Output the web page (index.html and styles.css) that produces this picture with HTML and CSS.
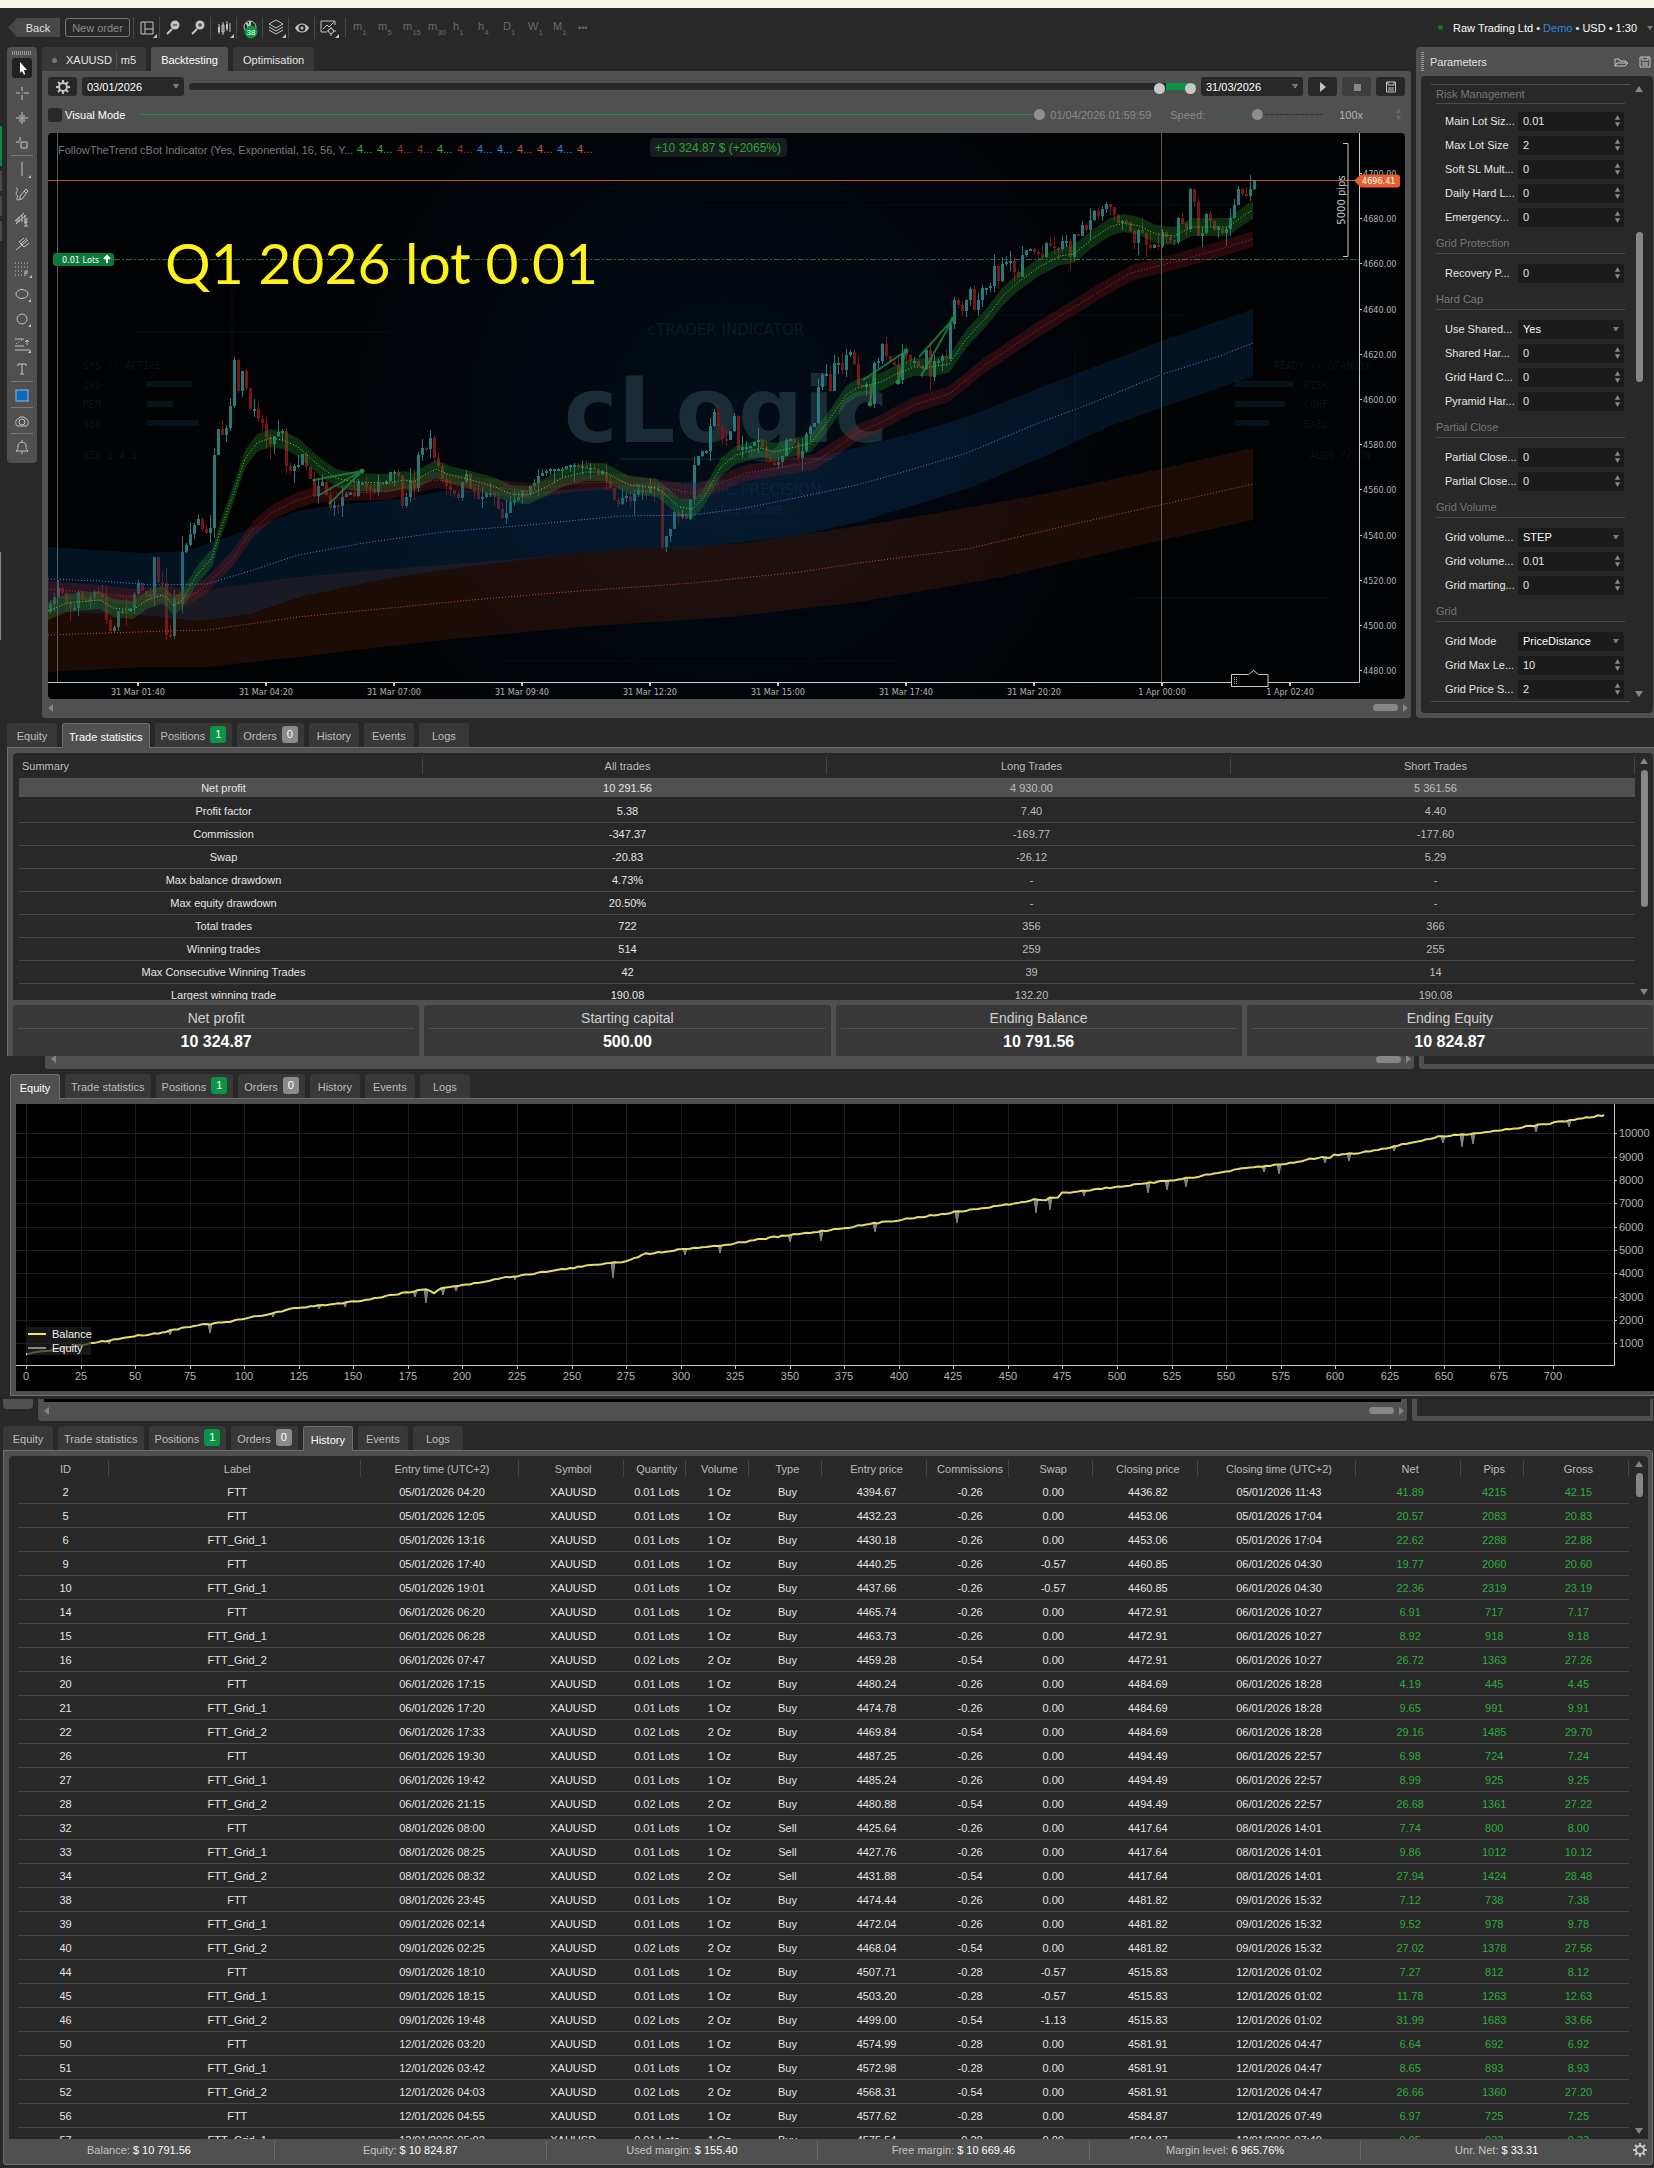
FILE: index.html
```html
<!DOCTYPE html>
<html lang="en">
<head>
<meta charset="utf-8">
<title>XAUUSD m5 – Backtesting</title>
<link rel="stylesheet" href="styles.css">
</head>
<body>
<div class="edge"><i class="edge-green"></i><i></i><i></i><i></i><i class="edge-thumb"></i></div>
<header class="topbar">
  <button class="back">Back</button>
  <button class="new-order">New order</button>
  <nav class="tools" aria-label="Chart tools">
    <button aria-label="Layout"><svg viewBox="0 0 22 22"><path d="M5 5h12v12H5zM9 5v12M9 12h8"/><path class="solid" d="M21 17v4h-4z"/></svg></button>
    <button class="slim" aria-label="Zoom out"><svg viewBox="0 0 22 22"><circle class="solid" cx="13" cy="8" r="4.500"/><path class="thick" d="M10 12l-5 5"/><path class="dark" d="M11 8h4"/></svg></button>
    <button class="slim last" aria-label="Zoom in"><svg viewBox="0 0 22 22"><circle class="solid" cx="13" cy="8" r="4.500"/><path class="thick" d="M10 12l-5 5"/><path class="dark" d="M11 8h4M13 6v4"/></svg></button>
    <button aria-label="Chart type"><svg viewBox="0 0 22 22"><path d="M6 7v10M10 5v13M14 4v10M17 6v9"/><path class="solid" d="M5 10h2v5H5zM13 7h2v5h-2z"/><path d="M9 8h2v7H9z"/><path class="solid" d="M21 17v4h-4z"/></svg></button>
    <button aria-label="Indicators"><svg viewBox="0 0 22 22"><circle cx="11" cy="10" r="6"/><path class="thick" d="M11 4v12M7 6c3 1 3 7 0 9"/><circle fill="#0a9447" stroke="none" cx="12" cy="15" r="6.500"/><text x="12" y="18" text-anchor="middle">38</text></svg></button>
    <button aria-label="Layers"><svg viewBox="0 0 22 22"><path d="M11 3l7 4-7 4-7-4zM4 10l7 4 7-4M4 13l7 4 7-4"/><path class="solid" d="M21 17v4h-4z"/></svg></button>
    <button aria-label="Visibility"><svg viewBox="0 0 22 22"><path class="solid" d="M4 11c3-6 11-6 14 0-3 6-11 6-14 0z"/><circle fill="#282828" stroke="none" cx="11" cy="11" r="3.500"/><circle class="solid" cx="11" cy="11" r="1.500"/></svg></button>
    <button aria-label="Optimise settings"><svg viewBox="0 0 22 22"><path d="M18 8V4H4v11h6M6 12l4-4 2 2 5-5"/><circle cx="14" cy="14" r="2.500"/><path d="M14 10v2M14 16v3M10 14h2M16 14h3"/><path class="solid" d="M22 17v4h-4z"/></svg></button>
  </nav>
  <nav class="frames" aria-label="Time frames">
    <button>m<sub>1</sub></button><button>m<sub>5</sub></button><button>m<sub>15</sub></button><button>m<sub>30</sub></button><button>h<sub>1</sub></button><button>h<sub>4</sub></button><button>D<sub>1</sub></button><button>W<sub>1</sub></button><button>M<sub>1</sub></button><button class="more">•••</button>
  </nav>
  <div class="account"><i class="online"></i><span>Raw Trading Ltd • <b>Demo</b> • USD • 1:30</span><i class="caret"></i></div>
</header>

<main class="workspace">
  <aside class="toolbox">
    <i class="grip"></i>
    <button class="on" aria-label="Pointer"><svg viewBox="0 0 20 20"><path fill="#fff" stroke="none" d="M8 4v11l2-2 2 4 1-1-1-4h3z"/></svg></button>
    <button aria-label="Crosshair"><svg viewBox="0 0 20 20"><path d="M10 4v4M10 12v5M4 10h4M12 10h5M10 10h1"/></svg></button>
    <button aria-label="Snap crosshair"><svg viewBox="0 0 20 20"><path d="M4 10h3M13 10h3M10 4v12M8 7v2M12 7v2M8 11v3M12 11v3M7 10h6"/></svg></button>
    <button aria-label="Marker"><svg viewBox="0 0 20 20"><path d="M8 4v4M4 9h4M9 9h6v6H9z"/></svg></button>
    <hr>
    <button aria-label="Line"><svg viewBox="0 0 20 20"><path d="M10 3v14"/><path class="solid" d="M19 16v3h-3z"/></svg></button>
    <button aria-label="Pencil"><svg viewBox="0 0 20 20"><path d="M4 4c4 1-2 6 1 7 2 1-2 5 1 5l4-1 6-8-2-2-6 7v3M12 7l2 2"/></svg></button>
    <button aria-label="Elliott wave"><svg viewBox="0 0 20 20"><path d="M3 12l9-8M4 15l10-9M7 8v5M10 6v7M13 6v9M12 13h4M12 17h4M16 10h-2v7M5 10v4"/></svg></button>
    <button aria-label="Pitchfork"><svg viewBox="0 0 20 20"><path d="M4 16l12-10M7 8l5 5M7 8l5-4M9 10l6-6M12 13l5-4"/></svg></button>
    <button aria-label="Fibonacci"><svg viewBox="0 0 20 20"><path class="dots" d="M3 4h14M3 8h14M3 12h8M3 16h8"/><path d="M13 17v-5h3M13 14h3"/><path class="solid" d="M20 16v3h-3z"/></svg></button>
    <button aria-label="Ellipse"><svg viewBox="0 0 20 20"><ellipse cx="10" cy="10" rx="6" ry="4.500"/><path class="solid" d="M19 15v3h-3z"/></svg></button>
    <button aria-label="Circle"><svg viewBox="0 0 20 20"><circle cx="10" cy="10" r="5"/><path class="solid" d="M19 15v3h-3z"/></svg></button>
    <button aria-label="Risk range"><svg viewBox="0 0 20 20"><path d="M3 5h9M3 12h9M3 16h15M15 11V6M13 8l2-2 2 2"/><path class="dots" d="M4 10l6-4"/><path class="solid" d="M19 16v3h-3z"/></svg></button>
    <button aria-label="Text"><svg viewBox="0 0 20 20"><path d="M6 7V5h8v2M10 5v10M8 15h4"/></svg></button>
    <hr>
    <button aria-label="Colour"><svg viewBox="0 0 20 20"><rect x="4" y="5" width="12" height="11" fill="#0a6cc0" stroke="#8fb8dc"/></svg></button>
    <hr>
    <button aria-label="Snapshot"><svg viewBox="0 0 20 20"><path d="M6 15c-3 0-3-7 0-7l2-2h4l2 2c3 0 3 7 0 7z"/><circle cx="10" cy="11" r="3"/></svg></button>
    <hr>
    <button aria-label="Alerts"><svg viewBox="0 0 20 20"><path d="M4 14h12c-2-2-2-3-2-5 0-5-8-5-8 0 0 2 0 3-2 5zM10 3v2M9 16h2"/></svg></button>
  </aside>

  <section class="desk">
    <div class="tabs top-tabs">
      <button class="symbol"><i class="bullet"></i>XAUUSD<span>m5</span></button>
      <button class="active">Backtesting</button>
      <button>Optimisation</button>
    </div>
    <div class="desk-body">
      <div class="period">
        <button class="sq gear" aria-label="Settings"><svg viewBox="0 0 16 16"><circle cx="8" cy="8" r="4"/><path d="M8 1v3M8 12v3M1 8h3M12 8h3M3 3l2 2M11 11l2 2M13 3l-2 2M5 11l-2 2"/></svg></button>
        <select class="date" aria-label="Start date"><option>03/01/2026</option></select>
        <div class="span">
          <input type="range" class="from" min="0" max="1000" value="969" aria-label="Range start">
          <input type="range" class="to" min="0" max="1000" value="1000" aria-label="Range end">
        </div>
        <select class="date" aria-label="End date"><option>31/03/2026</option></select>
        <button class="sq" aria-label="Play"><svg viewBox="0 0 16 16"><path class="solid" d="M5 3v10l6-5z"/></svg></button>
        <button class="sq off" aria-label="Stop"><svg viewBox="0 0 16 16"><path fill="#888" stroke="none" d="M5 5h7v7H5z"/></svg></button>
        <button class="sq" aria-label="Save"><svg viewBox="0 0 16 16"><path d="M3.500 3h9v10h-9zM5 3v3h6V3M5 9h6M5 11h6"/></svg></button>
      </div>
      <div class="visual">
        <label class="check"><input type="checkbox">Visual Mode</label>
        <input type="range" class="progress" value="100" disabled aria-label="Progress">
        <span class="stamp">01/04/2026 01:59:59</span>
        <label class="speed-label" for="speed">Speed:</label>
        <input id="speed" type="range" class="speed" value="38" disabled>
        <output>100x</output>
        <i class="updown"></i>
      </div>
      <svg id="price" class="price" viewBox="48 133 1357 566" role="img" aria-label="XAUUSD m5 chart">
        <defs><radialGradient id="glow" gradientUnits="userSpaceOnUse" cx="726" cy="420" r="460"><stop offset="0" stop-color="#020d16"/><stop offset=".5" stop-color="#01060d"/><stop offset="1" stop-color="#010203"/></radialGradient></defs>
        <rect x="48" y="133" width="1357" height="566" fill="url(#glow)"/>
        <g stroke="#060e12"><path d="M700 205h560M130 332h260M940 315h250M500 661h400M1130 598h200M232 280v120M1075 350v90M700 527h100"/></g>
        <g class="hud">
          <text x="83" y="369">SYS // ACTIVE</text><text x="83" y="389">CPU</text><text x="83" y="408">MEM</text><text x="83" y="428">SIG</text><text x="83" y="459">VER 2.4.1</text>
          <text x="1274" y="369">READY // STANDBY</text><text x="1304" y="389">RISK</text><text x="1304" y="408">CONF</text><text x="1304" y="428">EXEC</text><text x="1310" y="459">ALGO // ON</text>
          <path fill="#05131a" d="M147 381h45v6h-45zM147 401h26v6h-26zM147 420h52v6h-52zM1235 381h58v6h-58zM1235 401h50v6h-50zM1235 420h34v6h-34z"/>
        </g>
        <g class="mark">
          <text x="726" y="335" class="mark-s">cTRADER INDICATOR</text>
          <text x="726" y="442" class="mark-l">cLogic</text>
          <path d="M620 459h212" stroke="#081c24" stroke-width="2"/>
          <text x="726" y="495" class="mark-s">ALGORITHMIC PRECISION</text>
          <text x="726" y="514" class="mark-xs">INTELLIGENCE ENGINE</text>
        </g>
        <g id="candles"></g>
        <g id="bands"></g>
        <g class="deals"><path d="M314 480l48-9-43 24M330 503l32-32M863 380l43-29-8 31M870 404l4-32M919 357l34-38-32 57"/><circle cx="362" cy="471" r="2"/><circle cx="314" cy="480" r="1"/><circle cx="319" cy="495" r="1"/><circle cx="330" cy="503" r="1"/><circle cx="870" cy="404" r="2"/><circle cx="898" cy="382" r="2"/><circle cx="906" cy="351" r="2"/><circle cx="953" cy="319" r="2"/></g>
        <path d="M57.500 133v549M1161.500 133v549" stroke="#5c5c5c"/>
        <path d="M48 180.500h1311" stroke="#c0563f"/>
        <path d="M114 259.500h1245" stroke="#2c6a42" stroke-dasharray="6 2 2 2"/>
        <path d="M48 682.500h1311.500V133" fill="none" stroke="#c8c8c8"/>
        <g id="ticks" class="axis"></g>
        <path d="M1343 143.500h5v113h-5" fill="none" stroke="#c8c8c8"/>
        <text class="pips" transform="rotate(-90 1345 200)" x="1345" y="200">5000 pips</text>
        <path d="M1354 180.500l7-6h36q3 0 3 3v7q0 3-3 3h-36z" fill="#e85f2b"/>
        <text x="1362" y="184" class="tag">4696.41</text>
        <rect x="53" y="253" width="61" height="13" rx="3" fill="#0a7a3c"/>
        <text x="62" y="263" class="tag">0.01 Lots</text><path d="M107 263v-7M104 259l3-3 3 3" stroke="#fff" stroke-width="2" fill="none"/>
        <path d="M1231.500 674.500h17l5-4 5 4h9.500v12h-36.500z" fill="#000" stroke="#c8c8c8"/>
        <path d="M1234.500 677v7M1236.500 677v7" stroke="#aaa" stroke-dasharray="1 1"/>
        <text x="58" y="154" class="study">FollowTheTrend cBot Indicator (Yes, Exponential, 16, 56, Y...</text>
        <g id="outputs" class="study"></g>
        <rect x="650" y="138" width="137" height="19" rx="4" fill="#1a1d1e"/>
        <text x="718" y="152" class="gain">+10 324.87 $ (+2065%)</text>
        <text x="165" y="284" class="headline">Q1 2026 lot 0.01</text>
      </svg>
      <div class="hscroll"><i class="left"></i><i class="thumb"></i><i class="right"></i></div>
    </div>
  </section>

  <aside class="params">
    <header><i class="grip"></i><h2>Parameters</h2>
      <button aria-label="Open"><svg viewBox="0 0 16 16"><path d="M2 12V5h4l1 2h6v2M2 12h10l3-3H4z"/></svg></button>
      <button aria-label="Save"><svg viewBox="0 0 16 16"><path d="M3 3h10v10H3zM5 3v3h6V3M5 9h6M5 11h6"/></svg></button>
    </header>
    <div class="params-body">
      <form class="fields">
        <h3>Risk Management</h3>
        <div><label for="p1">Main Lot Siz...</label><span class="num"><input id="p1" value="0.01"></span></div>
        <div><label for="p2">Max Lot Size</label><span class="num"><input id="p2" value="2"></span></div>
        <div><label for="p3">Soft SL Mult...</label><span class="num"><input id="p3" value="0"></span></div>
        <div><label for="p4">Daily Hard L...</label><span class="num"><input id="p4" value="0"></span></div>
        <div><label for="p5">Emergency...</label><span class="num"><input id="p5" value="0"></span></div>
        <h3>Grid Protection</h3>
        <div><label for="p6">Recovery P...</label><span class="num"><input id="p6" value="0"></span></div>
        <h3>Hard Cap</h3>
        <div><label for="p7">Use Shared...</label><select id="p7"><option>Yes</option></select></div>
        <div><label for="p8">Shared Har...</label><span class="num"><input id="p8" value="0"></span></div>
        <div><label for="p9">Grid Hard C...</label><span class="num"><input id="p9" value="0"></span></div>
        <div><label for="p10">Pyramid Har...</label><span class="num"><input id="p10" value="0"></span></div>
        <h3>Partial Close</h3>
        <div><label for="p11">Partial Close...</label><span class="num"><input id="p11" value="0"></span></div>
        <div><label for="p12">Partial Close...</label><span class="num"><input id="p12" value="0"></span></div>
        <h3>Grid Volume</h3>
        <div><label for="p13">Grid volume...</label><select id="p13"><option>STEP</option></select></div>
        <div><label for="p14">Grid volume...</label><span class="num"><input id="p14" value="0.01"></span></div>
        <div><label for="p15">Grid marting...</label><span class="num"><input id="p15" value="0"></span></div>
        <h3>Grid</h3>
        <div><label for="p16">Grid Mode</label><select id="p16"><option>PriceDistance</option></select></div>
        <div><label for="p17">Grid Max Le...</label><span class="num"><input id="p17" value="10"></span></div>
        <div><label for="p18">Grid Price S...</label><span class="num"><input id="p18" value="2"></span></div>
      </form>
      <div class="vscroll"><i class="up"></i><i class="thumb"></i><i class="down"></i></div>
    </div>
  </aside>
</main>

<section class="report stats">
  <div class="tabs"><button>Equity</button><button class="active">Trade statistics</button><button>Positions<em class="pos">1</em></button><button>Orders<em>0</em></button><button>History</button><button>Events</button><button>Logs</button></div>
  <div class="report-body">
    <div class="listing">
      <table class="summary">
        <thead><tr><th>Summary<th>All trades<th>Long Trades<th>Short Trades</tr></thead>
        <tbody>
        <tr class="picked"><td>Net profit<td>10 291.56<td>4 930.00<td>5 361.56</tr>
        <tr><td>Profit factor<td>5.38<td>7.40<td>4.40</tr>
        <tr><td>Commission<td>-347.37<td>-169.77<td>-177.60</tr>
        <tr><td>Swap<td>-20.83<td>-26.12<td>5.29</tr>
        <tr><td>Max balance drawdown<td>4.73%<td>-<td>-</tr>
        <tr><td>Max equity drawdown<td>20.50%<td>-<td>-</tr>
        <tr><td>Total trades<td>722<td>356<td>366</tr>
        <tr><td>Winning trades<td>514<td>259<td>255</tr>
        <tr><td>Max Consecutive Winning Trades<td>42<td>39<td>14</tr>
        <tr><td>Largest winning trade<td>190.08<td>132.20<td>190.08</tr>
        </tbody>
      </table>
      <div class="vscroll"><i class="up"></i><i class="thumb"></i><i class="down"></i></div>
    </div>
    <dl class="cards">
      <div><dt>Net profit</dt><dd>10 324.87</dd></div>
      <div><dt>Starting capital</dt><dd>500.00</dd></div>
      <div><dt>Ending Balance</dt><dd>10 791.56</dd></div>
      <div><dt>Ending Equity</dt><dd>10 824.87</dd></div>
    </dl>
  </div>
</section>

<div class="seam seam-a"><div class="seam-main"><div class="hscroll"><i class="left"></i><i class="thumb"></i><i class="right"></i></div></div><div class="seam-side"></div></div>

<section class="report equity">
  <div class="tabs"><button class="active">Equity</button><button>Trade statistics</button><button>Positions<em class="pos">1</em></button><button>Orders<em>0</em></button><button>History</button><button>Events</button><button>Logs</button></div>
  <div class="report-body">
    <svg id="curve" class="curve" viewBox="16 1104 1638 287" role="img" aria-label="Balance and equity curve">
      <rect x="16" y="1104" width="1638" height="287"/>
      <g id="grid"></g>
      <path id="eq" fill="#7a7a7a" stroke="#8a8a8a"/>
      <path id="bal" fill="none" stroke="#e4df6a" stroke-width="2"/>
      <rect x="27" y="1327" width="64" height="28" fill="#222" fill-opacity=".7"/>
      <path d="M28 1334h18" stroke="#f0e860" stroke-width="2"/><path d="M28 1348h18" stroke="#8a8a8a" stroke-width="2"/>
      <text x="52" y="1338" class="key">Balance</text><text x="52" y="1352" class="key">Equity</text>
      <path d="M16 1365.500h1598.500V1104" fill="none" stroke="#c8c8c8"/>
    </svg>
  </div>
</section>

<div class="seam seam-b"><div class="seam-tool"></div><div class="seam-main"><div class="hscroll"><i class="left"></i><i class="thumb"></i><i class="right"></i></div></div><div class="seam-side"></div></div>

<section class="report history">
  <div class="tabs"><button>Equity</button><button>Trade statistics</button><button>Positions<em class="pos">1</em></button><button>Orders<em>0</em></button><button class="active">History</button><button>Events</button><button>Logs</button></div>
  <div class="report-body">
    <div class="listing">
      <table class="trades">
        <colgroup><col class="w91"><col class="w252"><col class="w157"><col class="w105"><col class="w62"><col class="w63"><col class="w73"><col class="w105"><col class="w82"><col class="w84"><col class="w105"><col class="w157"><col class="w105"><col class="w63"><col class="w105"></colgroup>
        <thead><tr><th>ID<th>Label<th>Entry time (UTC+2)<th>Symbol<th>Quantity<th>Volume<th>Type<th>Entry price<th>Commissions<th>Swap<th>Closing price<th>Closing time (UTC+2)<th>Net<th>Pips<th>Gross</tr></thead>
        <tbody>
        <tr><td>2<td>FTT<td>05/01/2026 04:20<td>XAUUSD<td>0.01 Lots<td>1 Oz<td>Buy<td>4394.67<td>-0.26<td>0.00<td>4436.82<td>05/01/2026 11:43<td>41.89<td>4215<td>42.15</tr>
        <tr><td>5<td>FTT<td>05/01/2026 12:05<td>XAUUSD<td>0.01 Lots<td>1 Oz<td>Buy<td>4432.23<td>-0.26<td>0.00<td>4453.06<td>05/01/2026 17:04<td>20.57<td>2083<td>20.83</tr>
        <tr><td>6<td>FTT_Grid_1<td>05/01/2026 13:16<td>XAUUSD<td>0.01 Lots<td>1 Oz<td>Buy<td>4430.18<td>-0.26<td>0.00<td>4453.06<td>05/01/2026 17:04<td>22.62<td>2288<td>22.88</tr>
        <tr><td>9<td>FTT<td>05/01/2026 17:40<td>XAUUSD<td>0.01 Lots<td>1 Oz<td>Buy<td>4440.25<td>-0.26<td>-0.57<td>4460.85<td>06/01/2026 04:30<td>19.77<td>2060<td>20.60</tr>
        <tr><td>10<td>FTT_Grid_1<td>05/01/2026 19:01<td>XAUUSD<td>0.01 Lots<td>1 Oz<td>Buy<td>4437.66<td>-0.26<td>-0.57<td>4460.85<td>06/01/2026 04:30<td>22.36<td>2319<td>23.19</tr>
        <tr><td>14<td>FTT<td>06/01/2026 06:20<td>XAUUSD<td>0.01 Lots<td>1 Oz<td>Buy<td>4465.74<td>-0.26<td>0.00<td>4472.91<td>06/01/2026 10:27<td>6.91<td>717<td>7.17</tr>
        <tr><td>15<td>FTT_Grid_1<td>06/01/2026 06:28<td>XAUUSD<td>0.01 Lots<td>1 Oz<td>Buy<td>4463.73<td>-0.26<td>0.00<td>4472.91<td>06/01/2026 10:27<td>8.92<td>918<td>9.18</tr>
        <tr><td>16<td>FTT_Grid_2<td>06/01/2026 07:47<td>XAUUSD<td>0.02 Lots<td>2 Oz<td>Buy<td>4459.28<td>-0.54<td>0.00<td>4472.91<td>06/01/2026 10:27<td>26.72<td>1363<td>27.26</tr>
        <tr><td>20<td>FTT<td>06/01/2026 17:15<td>XAUUSD<td>0.01 Lots<td>1 Oz<td>Buy<td>4480.24<td>-0.26<td>0.00<td>4484.69<td>06/01/2026 18:28<td>4.19<td>445<td>4.45</tr>
        <tr><td>21<td>FTT_Grid_1<td>06/01/2026 17:20<td>XAUUSD<td>0.01 Lots<td>1 Oz<td>Buy<td>4474.78<td>-0.26<td>0.00<td>4484.69<td>06/01/2026 18:28<td>9.65<td>991<td>9.91</tr>
        <tr><td>22<td>FTT_Grid_2<td>06/01/2026 17:33<td>XAUUSD<td>0.02 Lots<td>2 Oz<td>Buy<td>4469.84<td>-0.54<td>0.00<td>4484.69<td>06/01/2026 18:28<td>29.16<td>1485<td>29.70</tr>
        <tr><td>26<td>FTT<td>06/01/2026 19:30<td>XAUUSD<td>0.01 Lots<td>1 Oz<td>Buy<td>4487.25<td>-0.26<td>0.00<td>4494.49<td>06/01/2026 22:57<td>6.98<td>724<td>7.24</tr>
        <tr><td>27<td>FTT_Grid_1<td>06/01/2026 19:42<td>XAUUSD<td>0.01 Lots<td>1 Oz<td>Buy<td>4485.24<td>-0.26<td>0.00<td>4494.49<td>06/01/2026 22:57<td>8.99<td>925<td>9.25</tr>
        <tr><td>28<td>FTT_Grid_2<td>06/01/2026 21:15<td>XAUUSD<td>0.02 Lots<td>2 Oz<td>Buy<td>4480.88<td>-0.54<td>0.00<td>4494.49<td>06/01/2026 22:57<td>26.68<td>1361<td>27.22</tr>
        <tr><td>32<td>FTT<td>08/01/2026 08:00<td>XAUUSD<td>0.01 Lots<td>1 Oz<td>Sell<td>4425.64<td>-0.26<td>0.00<td>4417.64<td>08/01/2026 14:01<td>7.74<td>800<td>8.00</tr>
        <tr><td>33<td>FTT_Grid_1<td>08/01/2026 08:25<td>XAUUSD<td>0.01 Lots<td>1 Oz<td>Sell<td>4427.76<td>-0.26<td>0.00<td>4417.64<td>08/01/2026 14:01<td>9.86<td>1012<td>10.12</tr>
        <tr><td>34<td>FTT_Grid_2<td>08/01/2026 08:32<td>XAUUSD<td>0.02 Lots<td>2 Oz<td>Sell<td>4431.88<td>-0.54<td>0.00<td>4417.64<td>08/01/2026 14:01<td>27.94<td>1424<td>28.48</tr>
        <tr><td>38<td>FTT<td>08/01/2026 23:45<td>XAUUSD<td>0.01 Lots<td>1 Oz<td>Buy<td>4474.44<td>-0.26<td>0.00<td>4481.82<td>09/01/2026 15:32<td>7.12<td>738<td>7.38</tr>
        <tr><td>39<td>FTT_Grid_1<td>09/01/2026 02:14<td>XAUUSD<td>0.01 Lots<td>1 Oz<td>Buy<td>4472.04<td>-0.26<td>0.00<td>4481.82<td>09/01/2026 15:32<td>9.52<td>978<td>9.78</tr>
        <tr><td>40<td>FTT_Grid_2<td>09/01/2026 02:25<td>XAUUSD<td>0.02 Lots<td>2 Oz<td>Buy<td>4468.04<td>-0.54<td>0.00<td>4481.82<td>09/01/2026 15:32<td>27.02<td>1378<td>27.56</tr>
        <tr><td>44<td>FTT<td>09/01/2026 18:10<td>XAUUSD<td>0.01 Lots<td>1 Oz<td>Buy<td>4507.71<td>-0.28<td>-0.57<td>4515.83<td>12/01/2026 01:02<td>7.27<td>812<td>8.12</tr>
        <tr><td>45<td>FTT_Grid_1<td>09/01/2026 18:15<td>XAUUSD<td>0.01 Lots<td>1 Oz<td>Buy<td>4503.20<td>-0.28<td>-0.57<td>4515.83<td>12/01/2026 01:02<td>11.78<td>1263<td>12.63</tr>
        <tr><td>46<td>FTT_Grid_2<td>09/01/2026 19:48<td>XAUUSD<td>0.02 Lots<td>2 Oz<td>Buy<td>4499.00<td>-0.54<td>-1.13<td>4515.83<td>12/01/2026 01:02<td>31.99<td>1683<td>33.66</tr>
        <tr><td>50<td>FTT<td>12/01/2026 03:20<td>XAUUSD<td>0.01 Lots<td>1 Oz<td>Buy<td>4574.99<td>-0.28<td>0.00<td>4581.91<td>12/01/2026 04:47<td>6.64<td>692<td>6.92</tr>
        <tr><td>51<td>FTT_Grid_1<td>12/01/2026 03:42<td>XAUUSD<td>0.01 Lots<td>1 Oz<td>Buy<td>4572.98<td>-0.28<td>0.00<td>4581.91<td>12/01/2026 04:47<td>8.65<td>893<td>8.93</tr>
        <tr><td>52<td>FTT_Grid_2<td>12/01/2026 04:03<td>XAUUSD<td>0.02 Lots<td>2 Oz<td>Buy<td>4568.31<td>-0.54<td>0.00<td>4581.91<td>12/01/2026 04:47<td>26.66<td>1360<td>27.20</tr>
        <tr><td>56<td>FTT<td>12/01/2026 04:55<td>XAUUSD<td>0.01 Lots<td>1 Oz<td>Buy<td>4577.62<td>-0.28<td>0.00<td>4584.87<td>12/01/2026 07:49<td>6.97<td>725<td>7.25</tr>
        <tr><td>57<td>FTT_Grid_1<td>12/01/2026 05:02<td>XAUUSD<td>0.01 Lots<td>1 Oz<td>Buy<td>4575.54<td>-0.28<td>0.00<td>4584.87<td>12/01/2026 07:49<td>9.05<td>933<td>9.33</tr>
        </tbody>
      </table>
      <div class="vscroll"><i class="up"></i><i class="thumb"></i><i class="down"></i></div>
    </div>
    <footer class="totals">
      <p>Balance: <b>$ 10 791.56</b></p><p>Equity: <b>$ 10 824.87</b></p><p>Used margin: <b>$ 155.40</b></p><p>Free margin: <b>$ 10 669.46</b></p><p>Margin level: <b>6 965.76%</b></p><p>Unr. Net: <b>$ 33.31</b></p>
      <button class="gear" aria-label="Account settings"><svg viewBox="0 0 16 16"><circle cx="8" cy="8" r="4"/><path d="M8 1v3M8 12v3M1 8h3M12 8h3M3 3l2 2M11 11l2 2M13 3l-2 2M5 11l-2 2"/></svg></button>
    </footer>
  </div>
</section>
<script src="charts.js"></script>
</body>
</html>
```
FILE: styles.css
```css
* { box-sizing: border-box; }
body {
  margin: 0;
  border-top: 8px solid #faf3e3;
  background: #282828;
  color: #e6e6e6;
  font: 11px/16px "Liberation Sans", Arial, sans-serif;
  position: relative;
}
button, input, select { font: inherit; color: inherit; border: 0; margin: 0; padding: 0; background: none; appearance: none; border-radius: 0; }
h2, h3, p, dl, dd { margin: 0; font-weight: normal; font-size: 11px; }
i { display: block; font-style: normal; }
svg { display: block; stroke: #c4c4c4; fill: none; stroke-width: 1; }
svg text { stroke: none; }
.solid { fill: #c4c4c4; stroke: none; }
.thick { stroke-width: 2; }
.dark { stroke: #282828; }
.dots { stroke-dasharray: 1 2; }

/* slivers of the window behind, along the left border */
.edge { position: absolute; left: 0; top: 118px; width: 2px; display: flex; flex-direction: column; gap: 5px; }
.edge i { height: 20px; background: #484848; }
.edge .edge-green { height: 40px; background: #0a8a43; }
.edge .edge-thumb { height: 88px; margin-top: 306px; width: 1px; background: #8a8a8a; }

/* top bar */
.topbar { display: flex; align-items: center; height: 39px; padding: 0 1px 0 8px; }
.back { width: 52px; height: 19px; padding-left: 8px; background: #484848; clip-path: polygon(0 50%, 9px 0, 100% 0, 100% 100%, 9px 100%); color: #e0e0e0; }
.new-order { width: 65px; height: 19px; margin: 0 3px 0 5px; border: 1px solid #777; border-radius: 3px; color: #8c8c8c; }
.tools { display: flex; }
.tools button { width: 26px; height: 22px; padding: 0 2px; border-left: 1px solid #484848; }
.tools .slim.last { width: 25px; border-left: 0; }
.tools svg { width: 22px; height: 22px; }
.tools text { font-size: 8px; fill: #fff; }
.frames { display: flex; margin-left: 5px; padding-left: 7px; border-left: 1px solid #484848; color: #6c6c6c; }
.frames button { width: 25px; text-align: left; line-height: 16px; white-space: nowrap; }
.frames sub { font-size: 8px; line-height: 8px; vertical-align: -5px; }
.frames .more { font-size: 9px; }
.account { display: flex; align-items: center; margin-left: auto; gap: 10px; color: #fff; }
.account b { font-weight: normal; color: #2f8bd8; }
.online { width: 5px; height: 5px; border-radius: 50%; background: #0e7a1d; }
.caret { border: 3px solid transparent; border-top: 4px solid #777; border-bottom: 0; }

/* workspace */
.workspace { display: flex; gap: 5px; padding-left: 7px; }
.toolbox { flex: none; width: 30px; align-self: flex-start; padding: 4px 5px; background: #505050; border-radius: 4px; display: flex; flex-direction: column; align-items: center; }
.toolbox .grip { width: 20px; height: 4px; background: repeating-linear-gradient(90deg, #999 0 1px, transparent 1px 2px); }
.toolbox button { width: 20px; height: 25px; flex: none; }
.toolbox svg { width: 20px; height: 20px; margin: 0 auto; }
.toolbox .on svg { background: #222; border-radius: 3px; }
.toolbox hr { width: 22px; height: 1px; margin: 0; border: 0; background: #777; flex: none; }
.desk { flex: 1; min-width: 0; }
.tabs { display: flex; gap: 5px; }
.tabs button { display: flex; align-items: center; justify-content: center; gap: 5px; height: 24px; min-width: 50px; padding: 2px 6px 0; background: #383838; color: #bdbdbd; border-radius: 3px 3px 0 0; white-space: nowrap; }
.tabs .active { background: #505050; color: #fff; }
.top-tabs button { color: #e6e6e6; padding: 2px 10px 0; }
.top-tabs .symbol { gap: 4px; }
.symbol .bullet { width: 5px; height: 5px; border-radius: 50%; background: #777; margin-right: 5px; }
.symbol span { border-left: 1px solid #505050; padding-left: 4px; }
.desk-body { background: #505050; padding: 6px 6px 0; border-radius: 0 3px 3px 3px; }
.period { display: flex; gap: 5px; height: 19px; align-items: center; }
.sq { flex: none; width: 29px; height: 19px; background: #282828; border-radius: 3px; }
.sq svg { width: 16px; height: 16px; margin: 0 auto; }
.sq.off { background: #3e3e3e; }
.gear svg { stroke-width: 2; }
.date, .fields select {
  height: 19px; padding: 0 5px; border-radius: 3px; color: #fff;
  background-color: #282828;
  background-image: linear-gradient(to top left, transparent 50%, #777 50%), linear-gradient(to top right, transparent 50%, #777 50%);
  background-image: linear-gradient(to bottom right, #777 50%, transparent 50%), linear-gradient(to bottom left, #777 50%, transparent 50%);
  background-position: right 5px center, right 8px center;
  background-size: 3px 5px;
  background-repeat: no-repeat;
}
.date { flex: none; width: 102px; }
.span { flex: 1; display: grid; height: 7px; border-radius: 4px; align-items: center; background: linear-gradient(90deg, #282828 97%, #0a9447 97%); }
.span input { grid-area: 1 / 1; width: 100%; height: 11px; pointer-events: none; }
input[type=range]::-webkit-slider-thumb { appearance: none; width: 11px; height: 11px; border-radius: 50%; background: #c8c8c8; pointer-events: auto; }
input[type=range]:disabled::-webkit-slider-thumb { background: #8e8e8e; }
.visual { display: flex; align-items: center; height: 37px; color: #8a8a8a; }
.check { display: flex; align-items: center; gap: 3px; color: #fff; margin-right: 14px; }
.check input { width: 14px; height: 14px; border-radius: 3px; background: #282828; }
.progress { flex: 1; height: 11px; background: linear-gradient(#1f8a45, #1f8a45) center / 100% 1px no-repeat; }
.stamp { margin: 0 19px 0 5px; }
.speed { width: 108px; height: 11px; margin: 0 16px 0 10px; background: linear-gradient(90deg, #2c6a42 38%, transparent 38%) center / 100% 1px no-repeat, repeating-linear-gradient(90deg, #333 0 4px, transparent 4px 5px) center / 100% 1px no-repeat; }
.visual output { color: #b0b0b0; margin-right: 33px; }
.updown, .num::after { width: 5px; height: 12px; background: #8a8a8a; clip-path: polygon(50% 0, 100% 40%, 0 40%, 50% 0, 50% 100%, 0 60%, 100% 60%, 50% 100%); }
.updown { background: #6a6a6a; margin-right: 4px; }
.price { width: 100%; height: auto; border-radius: 4px; stroke: none; }
.hscroll { display: flex; align-items: center; height: 19px; gap: 5px; padding-bottom: 2px; }
.hscroll .thumb { width: 25px; height: 7px; margin-left: auto; border-radius: 4px; background: #868686; }
.hscroll .left { border: 4px solid transparent; border-right: 5px solid #868686; border-left: 0; }
.hscroll .right { border: 4px solid transparent; border-left: 5px solid #868686; border-right: 0; margin-right: -3px; }

/* chart lettering */
.hud text { font: 10px "DejaVu Sans Mono", monospace; fill: #0a1315; }
.mark text { font-family: "DejaVu Sans", sans-serif; text-anchor: middle; fill: #0a1a22; }
.mark .mark-l { font-size: 91px; font-weight: bold; fill: #1a2d37; }
.mark .mark-s { font-size: 15px; }
.mark .mark-xs { font-size: 10px; }
.axis text, .tag { font: 9px "DejaVu Sans Condensed", "Open Sans", sans-serif; fill: #b4b4b4; }
.price .tag { fill: #fff; }
.pips { font: 10px "DejaVu Sans", sans-serif; fill: #c8c8c8; text-anchor: middle; }
.study { font-size: 11px; fill: #7c7c7c; }
.gain { font-size: 12px; fill: #26a83a; text-anchor: middle; }
.headline { font: 57px Lato, sans-serif; fill: #fff21a; }
.deals { stroke: #1f8a45; fill: #1f8a45; }
.deals path { fill: none; stroke-width: 2; stroke-opacity: .8; }

/* parameters */
.params { flex: none; width: 238px; background: #505050; border-radius: 4px 0 0 4px; padding: 0 1px 5px 5px; display: flex; flex-direction: column; }
.params > header { display: flex; align-items: center; height: 29px; color: #e0e0e0; }
.params > header .grip { width: 3px; height: 19px; margin-right: 6px; background: repeating-linear-gradient(#999 0 1px, transparent 1px 2px); }
.params h2 { flex: 1; }
.params > header button { width: 16px; margin-left: 8px; }
.params-body { flex: 1; display: flex; padding: 8px 10px; gap: 5px; background: #282828; border-radius: 4px; }
.fields { flex: 1; min-width: 0; border: 1px solid #505050; border-width: 1px 0; padding: 0 5px; align-self: flex-start; }
.fields h3 { color: #787878; line-height: 19px; padding-top: 5px; margin-bottom: 7px; border-bottom: 1px solid #484848; }
.fields h3:first-child { padding-top: 0; line-height: 18px; margin-bottom: 5px; }
.fields > div { display: flex; align-items: center; height: 24px; padding: 0 1px 0 9px; }
.fields label { flex: 1; white-space: nowrap; }
.fields select, .num { width: 106px; height: 19px; background-color: #1b1b1b; border-radius: 3px; }
.num { display: flex; align-items: center; padding-right: 4px; }
.num input { flex: 1; min-width: 0; height: 19px; padding-left: 5px; }
.num::after { content: ""; }
.vscroll { flex: none; width: 8px; display: flex; flex-direction: column; align-items: center; }
.vscroll .thumb { width: 7px; border-radius: 4px; background: #868686; }
.vscroll .up { border: 4px solid transparent; border-bottom: 6px solid #868686; border-top: 0; }
.vscroll .down { border: 4px solid transparent; border-top: 6px solid #868686; border-bottom: 0; margin-top: auto; }
.params .vscroll { padding: 2px 0 8px; }
.params .thumb { height: 150px; margin-top: 140px; }

/* reports */
.report { padding-top: 5px; }
.report .active { border: 1px solid #707070; border-bottom: 0; height: 25px; margin-bottom: -1px; position: relative; }
.report em { width: 16px; height: 17px; border-radius: 3px; background: #8a8a8a; color: #fff; font-style: normal; line-height: 17px; text-align: center; margin-top: -3px; }
.report em.pos { background: #0a9447; }
.report-body { background: #505050; border: 1px solid #707070; border-width: 1px 0 0 1px; padding: 5px 0 0 5px; }
.listing { display: flex; overflow: hidden; background: #282828; border-radius: 4px 4px 0 0; }
table { flex: 1; width: 100%; min-width: 0; border-collapse: separate; border-spacing: 0; table-layout: fixed; }
th, td { padding: 0 0 0 5px; text-align: center; font-weight: normal; line-height: 16px; white-space: nowrap; border-bottom: 1px solid #464646; }
th { padding-top: 1px; color: #bdbdbd; border-bottom: 0; background: linear-gradient(#444, #444) right center / 1px 17px no-repeat; }
.stats { padding-left: 7px; }
.stats .listing { height: 247px; padding: 0 5px 0 6px; }
.stats .report-body { padding-right: 1px; }
.summary { align-self: flex-start; margin-right: 5px; }
.summary th, .summary td { height: 23px; }
.summary th { height: 24px; }
.summary th:first-child { text-align: left; padding-left: 3px; }
.summary td:nth-child(n+3) { color: #bdbdbd; }
.summary .picked td { background: linear-gradient(#505050, #505050) 0 1px / 100% 19px no-repeat; border-bottom-color: transparent; }
.stats .vscroll, .history .vscroll { padding: 5px 0; }
.stats .thumb { height: 137px; margin-top: 6px; }
.cards { display: grid; grid-template-columns: repeat(4, 1fr); gap: 5px; padding-top: 5px; }
.cards > div { background: #383838; border-radius: 3px 3px 0 0; padding: 3px 5px 0; height: 51px; text-align: center; }
.cards dt { font-size: 14px; line-height: 20px; border-bottom: 1px solid #505050; color: #d0d0d0; }
.cards dd { font-size: 16px; line-height: 25px; font-weight: bold; color: #fff; }

/* seams between stacked panes */
.seam { display: flex; gap: 5px; align-items: flex-start; }
.seam-main { flex: 1; background: #505050; padding: 0 6px; border-radius: 0 0 3px 3px; overflow: hidden; }
.seam-side { flex: none; width: 235px; border: solid #505050; border-width: 0 0 5px 5px; border-radius: 0 0 0 4px; height: 13px; }
.seam-a { padding-left: 45px; }
.seam-a .seam-main { height: 13px; }
.seam-a .hscroll { height: 8px; }
.seam-b { padding: 0 1px 0 3px; margin-top: 3px; }
.seam-tool { width: 30px; height: 10px; background: #505050; border-radius: 0 0 4px 4px; }
.seam-b .seam-main { height: 22px; }
.seam-b .hscroll { border-top: 3px solid #010203; height: 22px; }
.seam-b .seam-side { width: 241px; height: 22px; border-right: 3px solid #505050; }

.equity { padding-left: 10px; }
.equity .report-body { padding: 5px 0 4px 5px; border-bottom-width: 1px; }
.curve { width: 100%; height: auto; stroke: none; }
.curve rect:first-child { fill: #000; }
.curve text { font-size: 11px; fill: #b4b4b4; }
.curve .key { fill: #f0f0f0; }

.history { padding-left: 3px; padding-right: 1px; }
.history .report-body { border-width: 1px; border-radius: 0 3px 3px 3px; padding-right: 4px; }
.history .listing { height: 683px; padding: 0 5px 0 9px; }
.trades { align-self: flex-start; margin-right: 4px; }
.trades th, .trades td { height: 24px; padding-left: 4px; }
.trades td:nth-child(n+13) { color: #2fae3c; }
.history .vscroll { margin-left: 2px; }
.history .thumb { height: 24px; margin-top: 6px; }
.w91 { width: 91px; } .w252 { width: 252px; } .w157 { width: 157px; } .w105 { width: 105px; }
.w62 { width: 62px; } .w63 { width: 63px; } .w73 { width: 73px; } .w82 { width: 82px; } .w84 { width: 84px; }
.totals { display: flex; align-items: center; height: 25px; padding-bottom: 3px; color: #c4c4c4; }
.totals p { flex: 1; text-align: center; line-height: 19px; border-right: 1px solid #686868; }
.totals p:first-child { flex: none; width: 266px; padding-right: 5px; }
.totals p:nth-child(6) { border-right: 0; }
.totals b { font-weight: normal; color: #fff; }
.totals .gear { width: 16px; }
.totals .gear svg { width: 16px; height: 16px; }
```
FILE: charts.js
```js
const NS = 'http://www.w3.org/2000/svg';
const add = (host, tag, attrs, text) => {
  const el = document.createElementNS(NS, tag);
  for (const k in attrs) el.setAttribute(k, attrs[k]);
  if (text) el.textContent = text;
  host.appendChild(el);
};
const byId = id => document.getElementById(id);
const parse = s => s.trim().split(/\s+/).map(p => p.split(',').map(Number));
const at = (pts, x) => {
  let i = 1;
  while (i < pts.length - 1 && pts[i][0] < x) i++;
  const [a, b] = [pts[i - 1], pts[i]];
  return a[1] + (b[1] - a[1]) * Math.min(1, Math.max(0, (x - a[0]) / (b[0] - a[0])));
};
let seed = 7;
const rnd = () => (seed = (seed * 16807) % 2147483647) / 2147483647;

const price = parse(`48,612 50,608 53,600 57,585 63,592 69,606 75,610 78,594 87,602 95,594 103,598 106,620 111,636 117,612
127,608 133,604 137,580 147,594 152,592 154,560 158,580 164,589 166,632 170,638 173,598 178,602 182,554 186,541 193,528
197,516 202,531 206,535 210,525 213,468 217,432 222,439 229,424 233,355 237,390 242,374 246,388 250,413 254,405 262,424
266,436 272,441 278,430 283,428 286,464 293,470 298,466 302,450 306,465 311,480 314,493 321,477 330,507 333,510 341,500
348,487 355,493 361,482 368,487 377,488 386,482 395,468 398,480 402,510 409,482 414,485 418,453 423,450 430,442 435,458
440,473 445,487 450,492 456,500 461,487 466,478 473,492 479,497 486,495 491,488 496,503 502,518 507,510 514,497 521,490
528,491 534,482 539,470 546,475 555,467 562,465 571,462 580,467 593,472 604,473 611,493 616,510 623,493 630,498 637,488
646,492 655,487 660,497 662,548 668,532 674,515 682,517 687,522 693,473 698,452 705,453 710,422 714,415 720,433 725,440
730,432 734,416 738,453 745,442 750,450 757,433 762,447 766,457 779,467 784,443 793,435 798,457 803,450 809,427 816,423
818,383 825,367 830,388 834,363 841,370 846,353 852,350 856,380 862,384 866,388 870,403 873,367 878,364 882,346 888,355
895,367 898,376 902,353 906,351 913,363 919,372 921,378 926,353 930,374 937,357 944,361 948,360 950,323 953,304 958,305
963,315 969,288 974,309 983,290 990,288 994,265 998,283 1003,260 1010,258 1014,275 1020,273 1021,254 1028,248 1038,254
1044,258 1046,239 1053,250 1060,244 1067,239 1071,258 1074,237 1081,229 1088,231 1094,212 1103,210 1110,206 1117,219
1124,220 1131,235 1135,240 1138,229 1146,242 1156,250 1161,231 1165,231 1169,239 1174,246 1178,216 1184,233 1187,231
1189,183 1194,206 1198,239 1203,235 1206,212 1213,229 1224,231 1230,214 1238,191 1246,196 1254,181`);

const green = parse(`48,611 67,603 100,600 113,608 133,610 147,600 162,595 167,598 173,606 182,600 197,575 212,558 220,531
233,495 245,459 257,443 270,438 283,440 298,447 318,465 336,478 355,482 389,483 404,480 414,482 421,477 436,469 450,475
471,480 493,486 511,494 529,495 546,487 564,477 586,472 604,472 614,477 629,485 657,488 668,497 679,507 693,509 704,497
721,467 736,455 761,448 775,452 811,443 829,420 846,395 857,388 881,382 896,374 914,367 931,367 949,364 967,338 985,319
1003,296 1017,283 1039,267 1060,256 1074,254 1092,239 1110,227 1124,223 1139,226 1156,234 1174,236 1192,227 1228,227
1246,214 1253,210`);
const red = parse(`48,589 100,593 133,597 167,593 187,598 207,585 233,558 253,529 273,512 298,500 314,495 336,493 386,492
436,480 493,487 529,491 579,483 621,482 657,487 693,493 721,483 746,473 814,462 836,448 859,432 878,424 914,405 949,394
985,365 1039,329 1092,296 1131,273 1181,260 1217,250 1253,239`);
const blue = parse(`48,579 100,581 153,585 207,584 253,570 298,555 364,543 443,532 529,525 579,520 621,516 693,515 746,508
800,497 857,485 903,472 967,453 1031,426 1092,403 1160,375 1217,357 1253,343`);
const blueTop = parse(`48,547 143,553 187,551 233,535 298,511 336,505 407,498 443,491 550,491 604,487 650,482 693,482
730,479 764,470 818,457 859,447 910,434 967,417 1039,388 1110,361 1164,340 1253,309`);
const blueLow = parse(`48,612 133,614 200,621 250,614 300,597 389,578 479,565 579,553 639,548 693,548 746,542 800,535
859,522 967,489 1039,459 1110,426 1164,407 1253,376`);
const rust = parse(`48,635 167,631 207,630 298,617 471,600 579,591 693,583 800,572 859,563 967,549 1074,524 1160,505 1253,484`);
const rustTop = parse(`48,597 180,594 240,585 298,577 389,569 507,560 579,553 639,548 693,547 746,543 859,526 931,514
1039,495 1146,472 1253,448`);
const rustLow = parse(`48,672 147,667 207,667 298,657 443,640 579,627 729,617 859,602 1003,577 1110,552 1253,520`);

// candles, one every four units
const candles = byId('candles');
let open = 612;
for (let x = 50; x <= 1254; x += 4) {
  const close = Math.round(at(price, x) + (x > 1240 ? 0 : (rnd() - 0.5) * 9));
  const top = Math.min(open, close), h = Math.max(2, Math.abs(open - close));
  const hi = top - Math.round(rnd() * rnd() * 16), lo = top + h + Math.round(rnd() * rnd() * 16);
  const c = close <= open ? '#267a7c' : '#761616';
  add(candles, 'path', { d: `M${x + 0.5} ${hi}V${lo}`, stroke: c });
  add(candles, 'rect', { x: x - 1, y: top, width: 3, height: h, fill: c });
  open = close;
}

// moving-average bands
const bands = byId('bands');
const line = pts => pts.map(p => p.join(' ')).join('L');
const band = (top, low, fill, o) =>
  add(bands, 'path', { d: `M${line(top)}L${line([...low].reverse())}Z`, fill, 'fill-opacity': o });
const shift = (pts, d) => pts.map(([x, y]) => [x, y + d]);
band(rustTop, rustLow, '#7a2a0c', 0.24);
band(blueTop, blueLow, '#0f4478', 0.27);
band(shift(red, -8), shift(red, 8), '#861c22', 0.3);
band(shift(green, -9), shift(green, 9), '#27802a', 0.35);
[[rust, '#c2512f'], [blue, '#4a8ad8'], [red, '#a83030'], [green, '#5cd65c']].forEach(([pts, stroke]) =>
  add(bands, 'path', { d: `M${line(pts)}`, stroke, fill: 'none', 'stroke-dasharray': '1 2' }));

// price and time axes
const ticks = byId('ticks');
for (let i = 0; i < 12; i++) {
  const y = 173 + Math.round(i * 45.2);
  add(ticks, 'path', { d: `M1359 ${y + 0.5}h3`, stroke: '#c8c8c8' });
  add(ticks, 'text', { x: 1363, y: y + 4 }, (4700 - i * 20) + '.00');
}
['31 Mar 01:40', '31 Mar 04:20', '31 Mar 07:00', '31 Mar 09:40', '31 Mar 12:20', '31 Mar 15:00', '31 Mar 17:40',
  '31 Mar 20:20', '1 Apr 00:00', '1 Apr 02:40'].forEach((t, i) => {
  const x = 138 + i * 128;
  add(ticks, 'path', { d: `M${x} 683v3`, stroke: '#c8c8c8', 'stroke-width': 2 });
  add(ticks, 'text', { x, y: 695, 'text-anchor': 'middle' }, t);
});
const g = '#3fae3f', r = '#a83028', b = '#3f84d0', o = '#d05a30';
[g, g, r, r, g, r, b, b, o, o, b, o].forEach((fill, i) =>
  add(byId('outputs'), 'text', { x: 357 + i * 20, y: 153, fill }, '4...'));

// balance and equity
const grid = byId('grid');
for (let i = 0; i <= 28; i++) {
  const x = Math.round(26 + i * 54.55);
  add(grid, 'path', { d: `M${x + 0.5} 1104v261`, stroke: '#1c1c1e' });
  add(grid, 'path', { d: `M${x + 0.5} 1366v3`, stroke: '#c8c8c8' });
  add(grid, 'text', { x, y: 1380, 'text-anchor': 'middle' }, String(i * 25));
}
for (let i = 1; i <= 10; i++) {
  const y = Math.round(1366.6 - i * 23.33);
  add(grid, 'path', { d: `M16 ${y + 0.5}h1598`, stroke: '#1c1c1e' });
  add(grid, 'path', { d: `M1614 ${y + 0.5}h3`, stroke: '#c8c8c8' });
  add(grid, 'text', { x: 1619, y: y + 4 }, String(i * 1000));
}
const balance = parse(`26,1354 58,1349 93,1343 135,1336 159,1333 191,1326 228,1322 259,1316 296,1308 334,1304 371,1299
402,1293 428,1289 434,1293 440,1288 466,1285 508,1277 572,1268 614,1262 619,1263 646,1254 683,1249 725,1245 768,1238
830,1230 877,1223 956,1212 1025,1202 1036,1199 1045,1201 1049,1197 1057,1199 1062,1193 1142,1184 1195,1177 1247,1168
1285,1164 1322,1157 1330,1158 1334,1155 1359,1153 1396,1146 1438,1137 1486,1132 1539,1125 1604,1115`);
byId('bal').setAttribute('d', 'M' + Array.from({ length: 395 }, (_, i) => {
  const x = 26 + i * 4;
  return `${x} ${(at(balance, x) + (rnd() - 0.5) * 1.4).toFixed(1)}`;
}).join('L') + 'L1604 1115');
const dips = parse(`109,1344 170,1335 210,1333 273,1317 319,1309 345,1307 415,1297 426,1303 443,1295 456,1291 515,1280 613,1278
685,1255 720,1253 790,1242 821,1241 875,1232 957,1223 1036,1213 1050,1210 1084,1196 1148,1193 1167,1190 1186,1187
1264,1172 1279,1174 1325,1163 1349,1161 1394,1151 1443,1143 1462,1147 1473,1144 1536,1132 1569,1127`);
byId('eq').setAttribute('d', dips.map(([x, y]) => {
  const t = at(balance, x);
  return `M${x - 2} ${t}L${x} ${y}L${x + 2} ${t}`;
}).join(''));
```
